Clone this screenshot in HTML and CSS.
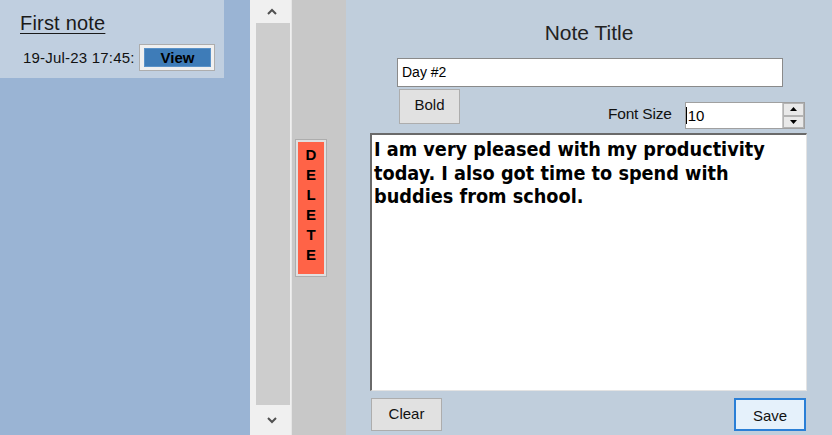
FILE: index.html
```html
<!DOCTYPE html>
<html>
<head>
<meta charset="utf-8">
<link rel="stylesheet" href="styles.css">
</head>
<body>
<div class="app">
  <div class="list">
    <div class="card">
      <div class="card-title">First note</div>
      <div class="card-row">
        <span class="stamp">19-Jul-23 17:45:</span>
        <span class="view-btn"><span class="view-inner">View</span></span>
      </div>
    </div>
  </div>
  <div class="scroll">
    <div class="arrow up"><svg width="10" height="7" viewBox="0 0 10 7"><path d="M1 6 L5 2 L9 6" fill="none" stroke="#505050" stroke-width="2"/></svg></div>
    <div class="thumb"></div>
    <div class="arrow down"><svg width="10" height="7" viewBox="0 0 10 7"><path d="M1 1 L5 5 L9 1" fill="none" stroke="#505050" stroke-width="2"/></svg></div>
  </div>
  <div class="side">
    <div class="delete"><div class="delete-inner"><span>D</span><span>E</span><span>L</span><span>E</span><span>T</span><span>E</span></div></div>
  </div>
  <div class="editor">
    <div class="heading">Note Title</div>
    <div class="title-input">Day #2</div>
    <div class="tools">
      <div class="btn bold-btn">Bold</div>
      <div class="fs-label">Font Size</div>
      <div class="num">
        <div class="num-val"><span class="caret"></span>10</div>
        <div class="spin">
          <div class="spin-btn"><svg width="7" height="4" viewBox="0 0 7 4"><path d="M0 4 L3.5 0 L7 4 Z" fill="#000"/></svg></div>
          <div class="spin-btn"><svg width="7" height="4" viewBox="0 0 7 4"><path d="M0 0 L3.5 4 L7 0 Z" fill="#000"/></svg></div>
        </div>
      </div>
    </div>
    <div class="body-text">I am very pleased with my productivity today. I also got time to spend with buddies from school.</div>
    <div class="actions">
      <div class="btn clear-btn">Clear</div>
      <div class="btn save-btn">Save</div>
    </div>
  </div>
</div>
</body>
</html>
```

FILE: styles.css
```css
* { box-sizing: border-box; }
html, body { margin: 0; padding: 0; }
body {
  width: 832px;
  height: 435px;
  overflow: hidden;
  font-family: "Liberation Sans", Arial, sans-serif;
  color: #000;
}
.app {
  display: flex;
  height: 435px;
}
.list {
  width: 250px;
  background: #9ab4d4;
}
.card {
  width: 224px;
  height: 78px;
  background: #c0cfe0;
  padding: 11px 0 0 20px;
}
.card-title {
  font-size: 20px;
  letter-spacing: 0.2px;
  color: #1a1a1a;
  text-decoration: underline;
  text-decoration-thickness: 1px;
  text-underline-offset: 3px;
  line-height: 24px;
}
.card-row {
  display: flex;
  align-items: center;
  margin-top: 9px;
  margin-left: 3px;
}
.stamp {
  font-size: 15px;
  letter-spacing: 0.2px;
  color: #111;
  width: 116px;
  white-space: nowrap;
}
.view-btn {
  width: 76px;
  height: 27px;
  background: #f0f0f0;
  border: 1px solid #adadad;
  padding: 3px 3px 3px 4px;
  display: flex;
}
.view-inner {
  flex: 1;
  background: #3e7cb8;
  border: 1px solid #5a92c8;
  font-weight: bold;
  font-size: 15px;
  text-align: center;
  line-height: 17px;
  color: #000;
}
.scroll {
  width: 42px;
  background: #f0f0f0;
  display: flex;
  flex-direction: column;
  border-right: 1px solid #e6e6e6;
}
.arrow {
  display: flex;
  justify-content: center;
  align-items: center;
  padding-left: 3px;
}
.arrow.up { height: 23px; }
.arrow.down { height: 30px; }
.thumb {
  flex: 1;
  margin-left: 6px;
  margin-right: 1px;
  background: #cdcdcd;
}
.side {
  width: 54px;
  background: #c8c8c8;
  padding: 139px 0 0 3px;
}
.delete {
  width: 32px;
  height: 138px;
  border: 1px solid #adadad;
  background: #e0e0e0;
  padding: 2px;
}
.delete-inner {
  height: 100%;
  background: #ff6347;
  display: flex;
  flex-direction: column;
  align-items: center;
  padding-top: 3px;
  font-weight: bold;
  font-size: 15px;
  line-height: 20px;
  color: #000;
}
.editor {
  flex: 1;
  background: #c0cedc;
  padding-left: 24px;
}
.heading {
  font-size: 21px;
  color: #222;
  text-align: center;
  margin: 20px 0 0 -24px;
  height: 25px;
  line-height: 25px;
}
.title-input {
  margin: 13px 0 0 27px;
  width: 386px;
  height: 29px;
  background: #fff;
  border: 1px solid #8a8a8a;
  font-size: 14px;
  line-height: 27px;
  padding-left: 4px;
  color: #000;
}
.tools {
  display: flex;
  align-items: flex-start;
  height: 46px;
}
.btn {
  background: #e1e1e1;
  border: 1px solid #adadad;
  font-size: 15px;
  color: #111;
  display: flex;
  justify-content: center;
  align-items: center;
}
.bold-btn {
  margin: 2px 0 0 29px;
  width: 61px;
  height: 35px;
  padding-bottom: 4px;
}
.fs-label {
  margin: 18px 0 0 148px;
  font-size: 15.5px;
  color: #111;
  letter-spacing: -0.2px;
}
.num {
  margin: 15px 0 0 13px;
  width: 120px;
  height: 27px;
  background: #fff;
  border: 1px solid #a0a0a0;
  display: flex;
}
.num-val {
  flex: 1;
  font-size: 15px;
  line-height: 25px;
  display: flex;
  align-items: center;
  color: #000;
}
.caret {
  width: 1px;
  height: 17px;
  background: #000;
  margin-right: 1px;
}
.spin {
  width: 22px;
  display: flex;
  flex-direction: column;
  background: #e6e6e6;
  border-left: 1px solid #c8c8c8;
}
.spin-btn {
  flex: 1;
  display: flex;
  justify-content: center;
  align-items: center;
  background: #e9e9e9;
  border: 1px solid #b4b4b4;
}
.body-text {
  width: 437px;
  height: 258px;
  background: #fff;
  border-top: 2px solid #6a6a6a;
  border-left: 2px solid #6a6a6a;
  border-right: 1px solid #e3e3e3;
  border-bottom: 1px solid #e3e3e3;
  font-family: "DejaVu Sans Condensed", "DejaVu Sans", Verdana, sans-serif;
  font-stretch: condensed;
  font-weight: bold;
  font-size: 19.7px;
  line-height: 23.5px;
  padding: 3px 10px 0 2px;
  color: #000;
}
.actions {
  display: flex;
  justify-content: space-between;
  width: 435px;
  margin: 7px 0 0 1px;
}
.clear-btn {
  width: 71px;
  height: 33px;
  padding-bottom: 3px;
}
.save-btn {
  width: 72px;
  height: 33px;
  background: #e5f1fb;
  border: 2px solid #2a7fd6;
  padding-top: 1px;
}
```
